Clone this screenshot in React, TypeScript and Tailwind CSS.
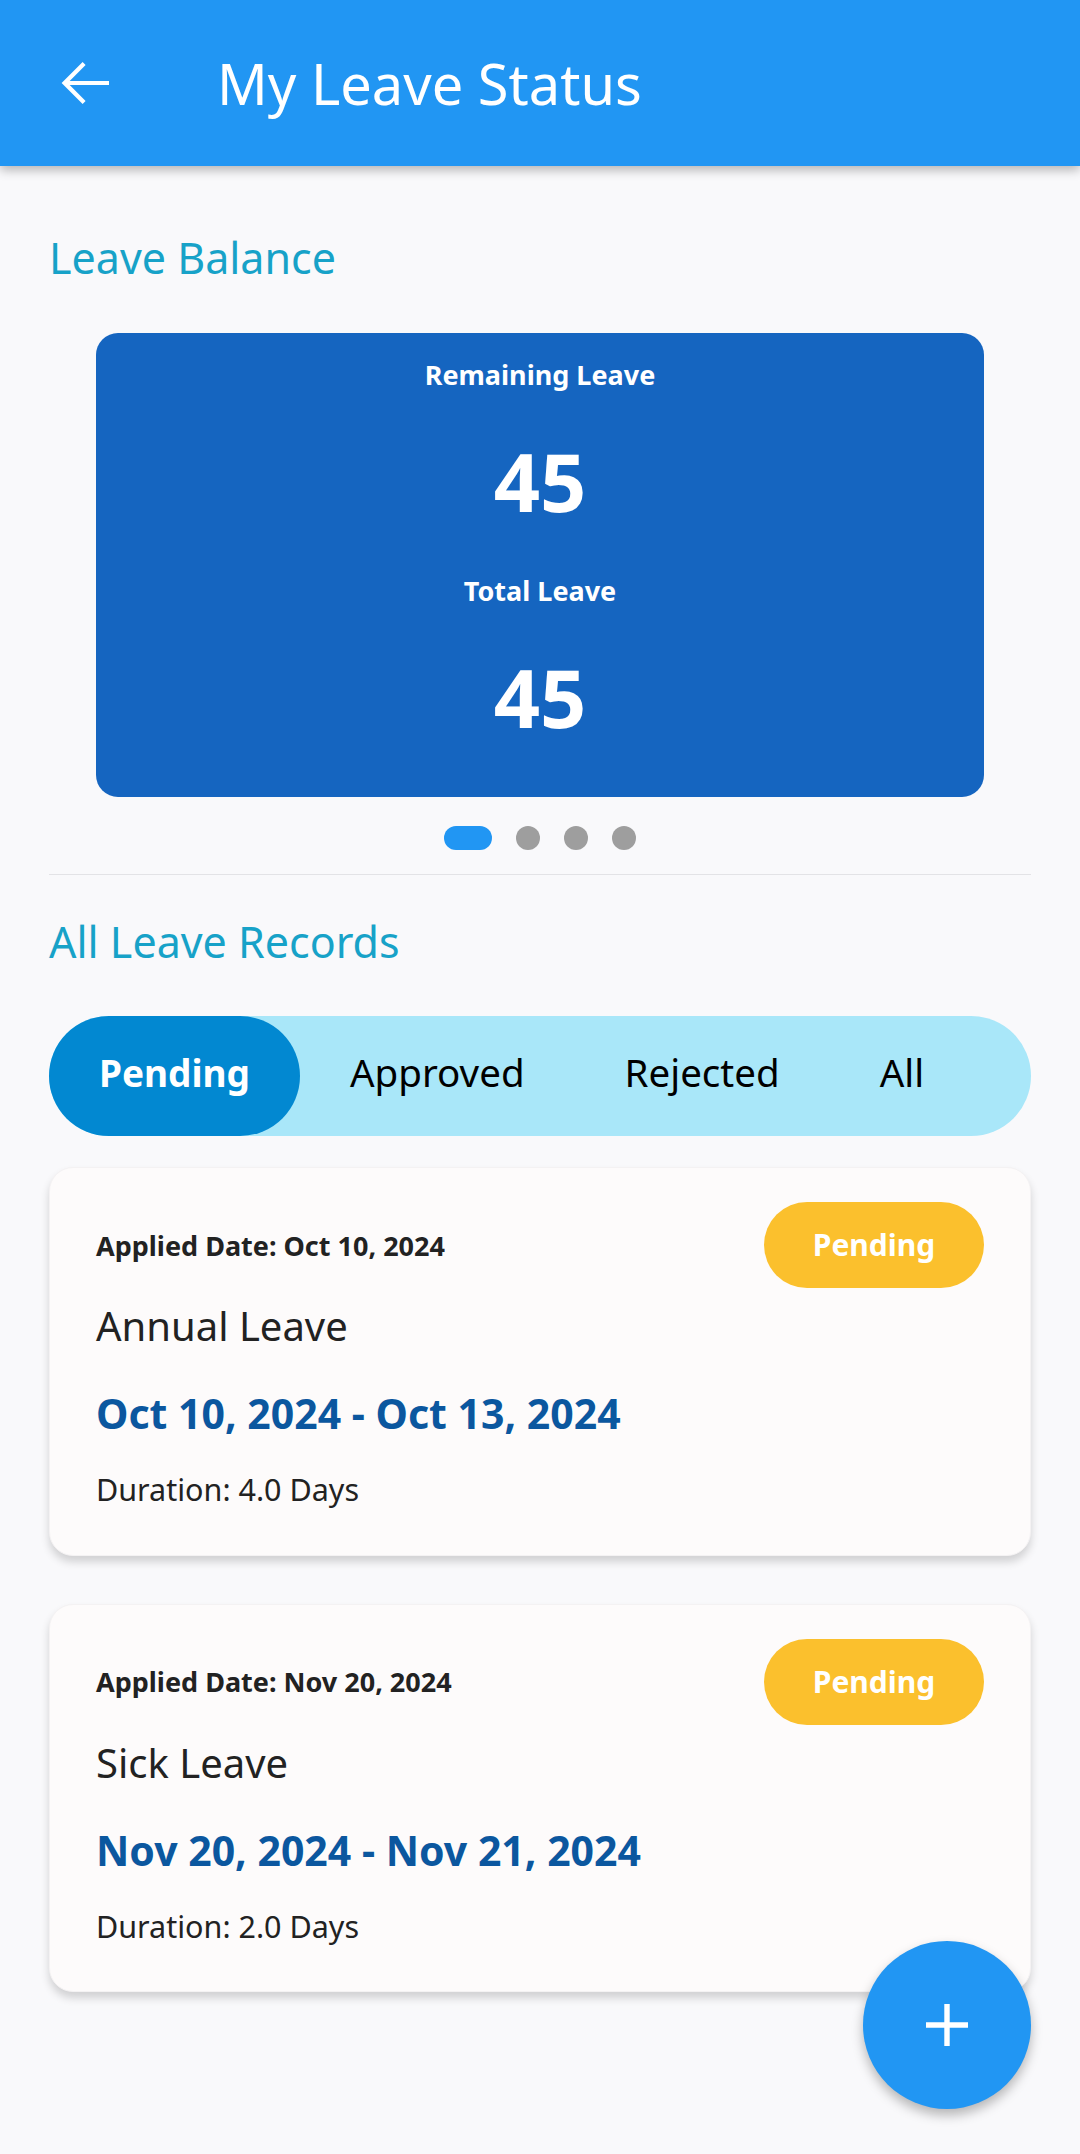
import React from 'react';

const leaves = [
  {
    applied: 'Oct 10, 2024',
    type: 'Annual Leave',
    range: 'Oct 10, 2024 - Oct 13, 2024',
    duration: '4.0 Days',
  },
  {
    applied: 'Nov 20, 2024',
    type: 'Sick Leave',
    range: 'Nov 20, 2024 - Nov 21, 2024',
    duration: '2.0 Days',
  },
];

const tabs = ['Pending', 'Approved', 'Rejected', 'All'];

function LeaveCard({ item }: { item: (typeof leaves)[number] }) {
  return (
    <div className="rounded-[24px] bg-[#fdfbfb] border border-[#f4f2f3] shadow-[0_6px_8px_rgba(0,0,0,0.16)] pl-[46px] pr-[46px] pt-[34px] pb-[50px]">
      <div className="flex items-center justify-between">
        <span className="text-[27px] font-bold leading-none text-[#222]">
          Applied Date: {item.applied}
        </span>
        <span className="h-[86px] w-[220px] rounded-full bg-[#fbc02d] flex items-center justify-center text-[30px] font-bold text-white leading-none">
          Pending
        </span>
      </div>
      <div className="mt-[18px] text-[40px] leading-none text-[#222]">{item.type}</div>
      <div className="mt-[47px] text-[41px] font-bold leading-none text-[#0b579f]">{item.range}</div>
      <div className="mt-[40px] text-[30.5px] leading-none text-[#222]">Duration: {item.duration}</div>
    </div>
  );
}

export default function App() {
  return (
    <div
      className="relative min-h-[2154px] w-[1080px] bg-[#f9f9fb]"
      style={{ fontFamily: '"Noto Sans", "Open Sans", sans-serif' }}
    >
      {/* App bar */}
      <header className="relative z-10 h-[166px] bg-[#2196f3] flex items-center pl-[49px] shadow-[0_4px_10px_rgba(0,0,0,0.28)]">
        <svg width="72" height="72" viewBox="0 0 24 24" fill="white">
          <path d="M20 11.3H6.9l5.3-5.3-1-1L4.2 12l7 7 1-1-5.3-5.3H20z" />
        </svg>
        <h1 className="ml-[96px] text-[56px] leading-none text-white font-normal">My Leave Status</h1>
      </header>

      <main className="px-[49px]">
        <h2 className="mt-[70px] text-[43px] leading-none text-[#17a2c8]">Leave Balance</h2>

        <div className="mt-[54px] mx-[47px] h-[464px] rounded-[22px] bg-[#1565c0] flex flex-col items-center text-white pt-[28px]">
          <div className="text-[27px] font-bold leading-none">Remaining Leave</div>
          <div className="mt-[52px] text-[81px] font-bold leading-none">45</div>
          <div className="mt-[56px] text-[27px] font-bold leading-none">Total Leave</div>
          <div className="mt-[52px] text-[81px] font-bold leading-none">45</div>
        </div>

        <div className="mt-[29px] flex justify-center gap-[24px]">
          <span className="h-[24px] w-[48px] rounded-full bg-[#2196f3]" />
          <span className="h-[24px] w-[24px] rounded-full bg-[#9e9e9e]" />
          <span className="h-[24px] w-[24px] rounded-full bg-[#9e9e9e]" />
          <span className="h-[24px] w-[24px] rounded-full bg-[#9e9e9e]" />
        </div>

        <div className="mt-[24px] h-px bg-[#e3e3e6]" />

        <h2 className="mt-[45px] text-[43px] leading-none text-[#17a2c8]">All Leave Records</h2>

        <div className="mt-[53px] h-[120px] rounded-full bg-[#a9e7f9] flex items-stretch">
          {tabs.map((t, i) => (
            <div
              key={t}
              className={
                i === 0
                  ? 'px-[50px] pb-[8px] rounded-full bg-[#0288d1] text-white font-bold flex items-center text-[37px] leading-none'
                  : 'px-[50px] pb-[8px] text-black flex items-center text-[38.5px] leading-none'
              }
            >
              {t}
            </div>
          ))}
        </div>

        <div className="mt-[31px] flex flex-col gap-[48px]">
          {leaves.map((l) => (
            <LeaveCard key={l.applied} item={l} />
          ))}
        </div>
      </main>

      {/* Floating action button */}
      <button className="absolute right-[49px] bottom-[45px] h-[168px] w-[168px] rounded-full bg-[#2196f3] flex items-center justify-center shadow-[0_6px_12px_rgba(0,0,0,0.28)]">
        <svg width="72" height="72" viewBox="0 0 24 24" fill="white">
          <path d="M19 12.9h-6.1V19h-1.8v-6.1H5v-1.8h6.1V5h1.8v6.1H19z" />
        </svg>
      </button>
    </div>
  );
}
